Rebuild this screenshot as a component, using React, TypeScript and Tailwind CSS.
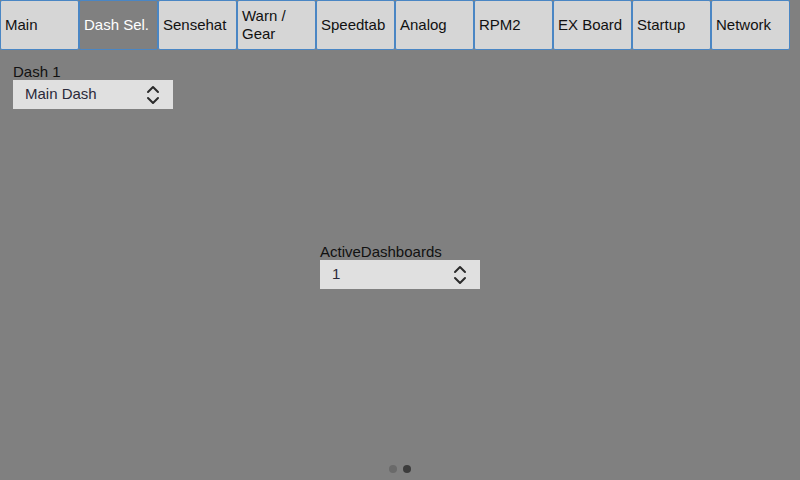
const tabs = ["Main", "Dash Sel.", "Sensehat", "Warn / Gear", "Speedtab", "Analog", "RPM2", "EX Board", "Startup", "Network"];

function Chevrons() {
  return (
    <svg width="14" height="22" viewBox="0 0 14 22" fill="none" stroke="#2b2b2b" strokeWidth="2" strokeLinecap="round" strokeLinejoin="round">
      <path d="M2 8 L7 3 L12 8" />
      <path d="M2 14 L7 19 L12 14" />
    </svg>
  );
}

function SpinBox({ label, value }: { label: string; value: string }) {
  return (
    <div className="flex flex-col w-[160px]">
      <span className="text-[15px] leading-[17px] text-[#111]">{label}</span>
      <div className="h-[29px] bg-[#e0e0e0] flex items-center justify-between pl-[12px] pr-[13px]">
        <span className="text-[15px] text-[#2a2a3a]">{value}</span>
        <Chevrons />
      </div>
    </div>
  );
}

export default function App() {
  return (
    <div className="w-[800px] h-[480px] bg-[#808080] flex flex-col font-['Liberation_Sans',Arial,sans-serif] overflow-hidden">
      <div className="flex h-[50px] shrink-0">
        {tabs.map((t, i) => (
          <div
            key={t}
            className={
              i === 1
                ? "w-[79px] h-[50px] border border-[#4a86c4] rounded-[2px] bg-[#808080] text-white flex items-center px-[4px] text-[15px] leading-[18px]"
                : "w-[79px] h-[50px] border border-[#4a86c4] rounded-[2px] bg-[#d6d6d6] text-[#111] flex items-center px-[4px] text-[15px] leading-[18px]"
            }
          >
            {t}
          </div>
        ))}
      </div>
      <div className="flex-1 flex flex-col relative">
        <div className="pl-[13px] pt-[13px]">
          <SpinBox label="Dash 1" value="Main Dash" />
        </div>
        <div className="flex-1 flex items-center justify-center pb-[42px]">
          <SpinBox label="ActiveDashboards" value="1" />
        </div>
        <div className="flex justify-center gap-[6px] pb-[7px]">
          <div className="w-[8px] h-[8px] rounded-full bg-[#6a6a6a]" />
          <div className="w-[8px] h-[8px] rounded-full bg-[#3c3c3c]" />
        </div>
      </div>
    </div>
  );
}
